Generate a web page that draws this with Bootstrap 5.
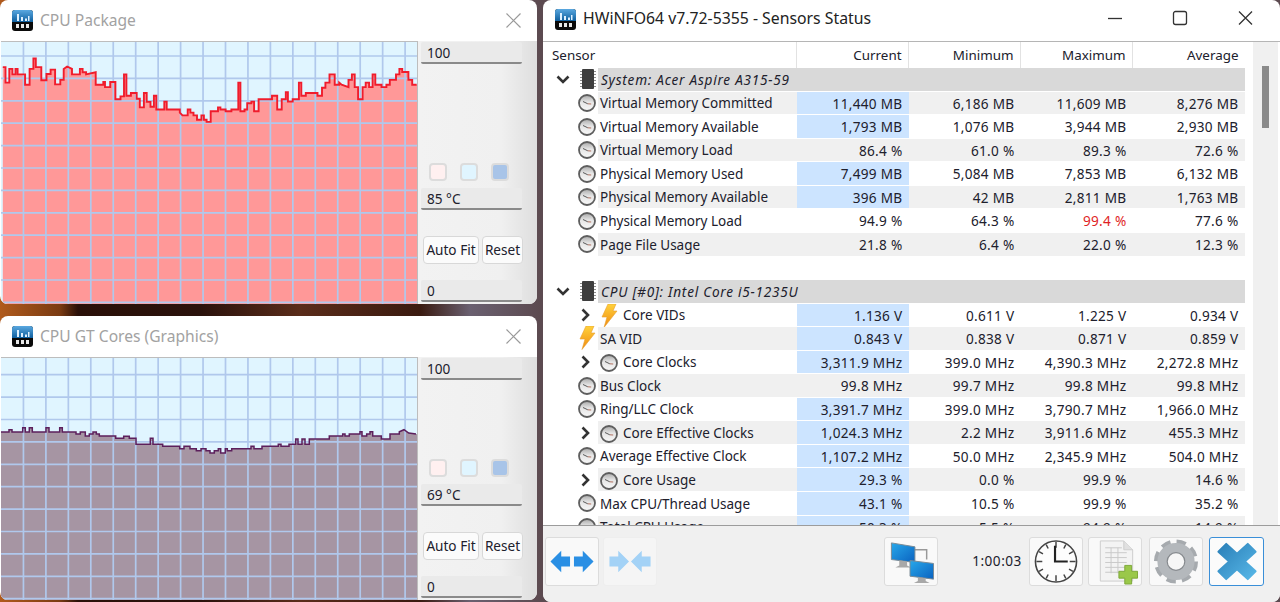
<!DOCTYPE html>
<html lang="en">
<head>
  <meta charset="UTF-8">
  <title>HWiNFO64 Sensors Status</title>
  <link rel="stylesheet" href="https://cdn.jsdelivr.net/npm/bootstrap@5.3.0/dist/css/bootstrap.min.css">
  <style>
    html, body { height: 100%; margin: 0; overflow: hidden; }
    body {
      background: linear-gradient(90deg, #b05a1c 0, #7a3b12 60px, #2a1008 78px, #2a120c 200px, #5a2c1a 300px, #3a1a10 420px, #6a6070 470px, #5c4a50 540px);
      font-family: "Noto Sans", "Liberation Sans", sans-serif;
      font-size: 13.6px;
      color: #20202c;
    }
    .win { background: #fff; border-radius: 8px; overflow: hidden; }
    .win-graph { left: 0; width: 537px; }
    .win-a { top: 0; height: 304px; }
    .win-b { top: 316px; height: 284px; }
    .win-main { left: 543px; top: 0; width: 737px; height: 602px; }
    .titlebar { height: 41px; flex: none; }
    .title-dim { color: #a2a2a2; font-size: 15.6px; margin-left: 7px; }
    .title-main { color: #222; font-size: 15.8px; margin-left: 7px; }
    .titlebar-main { padding-bottom: 3px; }
    .win-btns { margin: 0 27px 3px auto; }
    .app-icon { margin-left: 12px; }
    .close-dim { margin-left: auto; margin-right: 16px; }
    .graph-svg { display: block; width: 416px; flex: none; margin-left: 1px; border-top: 1px solid #bdbdbd; border-right: 1px solid #bdbdbd; box-sizing: content-box; }
    .side { flex: 1; padding: 1px 0 2px 3px; background: linear-gradient(90deg, #f2f2f2 0, #f0f0f0 70%, #dedede 100%); }
    .side-field { width: 101px; height: 22px; line-height: 21px; padding-left: 6px; background: #eaeaea; border-bottom: 2px solid #8a8a8a; border-radius: 2px; }
    .swatch-row { gap: 13px; margin: 0 0 7px 8px; }
    .swatch { width: 18px; height: 18px; border: 2px solid #dcdcdc; border-radius: 4px; }
    .fit-row { gap: 3px; margin: 26px 0 16px 2px; }
    .fit-btn { height: 28px; padding: 0; font-size: 13.6px; line-height: 26px; white-space: nowrap; background: #fbfbfb; border: 1px solid #d8d8d8; border-radius: 4px; color: #20202c; }
    .fit-wide { width: 56px; }
    .fit-narrow { width: 41px; }
    .main-body { flex: 1; min-height: 0; overflow: hidden; border-top: 1px solid #b5b5b5; }
    .sensors { width: 702px; padding-left: 5px; }
    .head-row { height: 26.2px; font-size: 13.4px; }
    .head-name { width: 248.5px; padding-left: 4px; line-height: 27px; border-right: 1px solid #e2e2e2; }
    .head-val { width: 112px; padding-right: 6px; line-height: 27px; text-align: right; border-right: 1px solid #e2e2e2; }
    .head-val:last-child { border-right: 0; }
    .srow { height: 23.55px; padding-bottom: 1px; line-height: 23.5px; white-space: nowrap; }
    .gutter { width: 50px; flex: none; position: relative; }
    .chev { display: block; flex: none; }
    .gutter-in { height: 100%; padding-left: 8px; gap: 9px; }
    .gutter-exp { padding-right: 8px; }
    .gutter-ico { height: 100%; justify-content: flex-end; padding-right: 2px; }
    .sname { width: 198.5px; flex: none; padding: 2px 0 0 2px; font-size: 13.5px; }
    .sval { width: 112px; flex: none; padding-right: 6px; text-align: right; letter-spacing: .3px; }
    .alt .sname, .alt .sval { background: #f0f0f0; }
    .sval.hot, .alt .sval.hot { background: #cce4ff; }
    .group-name { flex: 1; background: #d9d9d9; padding-left: 3px; font-style: italic; letter-spacing: .75px; }
    .peak { color: #e01f26; }
    .ind-ico { margin-right: 5px; flex: none; }
    .scroll-track { width: 25px; margin-left: 8px; background: #f0f0f0; padding: 24px 0 0 9px; }
    .scroll-thumb { width: 7px; height: 62px; background: #8a8a8a; }
    .toolbar { height: 77px; flex: none; background: #f0f0f0; border-top: 1px solid #9c9c9c; padding: 11px 16px 0 2px; }
    .tool-btn { width: 54px; height: 49px; padding: 0; flex: none; background: #f9f9f9; border: 1px solid #dcdcdc; border-radius: 3px; }
    .tool-off { background: #f5f5f5; border-color: #eeeeee; }
    .tool-on { background: #fbfbfb; border-color: #3a8fd8; width: 55px; margin-left: 2px; }
    .tool-spacer { width: 219px; flex: none; }
    .tool-doc { margin-left: 1px; }
    .tool-gear { margin-left: 3px; }
    .timer { margin: 0 3px 0 30px; width: 50px; text-align: center; line-height: 47px; font-size: 13.6px; letter-spacing: .5px; white-space: nowrap; }
  </style>
</head>
<body>
  <svg width="0" height="0" class="position-absolute">
    <defs>
      <linearGradient id="gBlue" x1="0" y1="0" x2="0" y2="1"><stop offset="0" stop-color="#5aa8e0"/><stop offset="1" stop-color="#0f5f9e"/></linearGradient>
      <linearGradient id="gFace" x1="0" y1="0" x2="0" y2="1"><stop offset="0" stop-color="#a8a8a8"/><stop offset=".45" stop-color="#e6e6e6"/><stop offset="1" stop-color="#f8f8f8"/></linearGradient>
      <linearGradient id="gBolt" x1="0" y1="0" x2="0" y2="1"><stop offset="0" stop-color="#ffd23c"/><stop offset="1" stop-color="#f08a10"/></linearGradient>
      <linearGradient id="gX" x1="0" y1="0" x2="1" y2="1"><stop offset="0" stop-color="#2a7fb8"/><stop offset="1" stop-color="#58b8e8"/></linearGradient>
      <linearGradient id="gScreen" x1="0" y1="0" x2="1" y2="1"><stop offset="0" stop-color="#28a8ea"/><stop offset="1" stop-color="#0a62c0"/></linearGradient>
      <symbol id="appIcon" viewBox="0 0 21 21">
        <rect width="21" height="21" rx="3" fill="#0a0a0a"/>
        <path d="M3 0h15a3 3 0 0 1 3 3v9H0V3a3 3 0 0 1 3-3z" fill="url(#gBlue)"/>
        <path d="M5 4h2v7H5zM9 7h2v4H9zM13 8.500h2V11h-2zM16 6h1.500v5H16z" fill="#dff1ff"/>
        <path d="M4 14h3v4H4zM9 14h3v4H9zM14 14h3v4h-3z" fill="#e8e8e8"/>
      </symbol>
      <symbol id="gaugeIcon" viewBox="0 0 18 18">
        <circle cx="9" cy="9" r="8" fill="url(#gFace)" stroke="#5e5e5e" stroke-width="1.800"/>
        <path d="M5 7.500L9.800 9.800" fill="none" stroke="#5a5a5a" stroke-width="1"/>
        <path d="M9.800 9.800l3.400.2" stroke="#b07060" stroke-width="1"/>
      </symbol>
      <symbol id="boltIcon" viewBox="0 0 18 24">
        <path d="M8 0h8l-3 7h4L4 23.500l3-10.500H2z" fill="url(#gBolt)" stroke="#e8a030" stroke-width=".6"/>
      </symbol>
      <symbol id="chipIcon" viewBox="0 0 18 22">
        <rect x="3" y="1" width="12" height="20" rx="1" fill="#3e3e3e"/>
        <path d="M1 3.500h2M1 6.500h2M1 9.500h2M1 12.500h2M1 15.500h2M1 18.500h2M15 3.500h2M15 6.500h2M15 9.500h2M15 12.500h2M15 15.500h2M15 18.500h2" stroke="#8a8a8a"/>
      </symbol>
      <symbol id="chevDown" viewBox="0 0 14 9"><path d="M1.500 1.500L7 7l5.500-5.500" fill="none" stroke="#333" stroke-width="2.600"/></symbol>
      <symbol id="chevRight" viewBox="0 0 9 14"><path d="M1.500 1.500L7 7l-5.500 5.500" fill="none" stroke="#333" stroke-width="2.600"/></symbol>
    </defs>
  </svg>

  <!-- CPU Package window -->
  <div class="win win-graph win-a position-absolute d-flex flex-column">
    <div class="titlebar d-flex align-items-center">
      <svg class="app-icon" width="21" height="21"><use href="#appIcon"/></svg>
      <span class="title-dim">CPU Package</span>
      <svg class="close-dim" width="15" height="15" viewBox="0 0 15 15"><path d="M.5 .5l14 14M14.500 .5l-14 14" stroke="#9a9a9a" stroke-width="1.200"/></svg>
    </div>
    <div class="d-flex flex-grow-1">
      <svg id="graphA" class="graph-svg" height="262"></svg>
      <div class="side d-flex flex-column">
        <div class="side-field">100</div>
        <div class="swatch-row d-flex mt-auto">
          <div class="swatch" style="background:#fff0f0"></div>
          <div class="swatch" style="background:#e0f5ff"></div>
          <div class="swatch" style="background:#a8c4e8"></div>
        </div>
        <div class="side-field">85 °C</div>
        <div class="fit-row d-flex">
          <button class="btn fit-btn fit-wide">Auto Fit</button>
          <button class="btn fit-btn fit-narrow">Reset</button>
        </div>
        <div class="side-field">0</div>
      </div>
    </div>
  </div>

  <!-- CPU GT Cores window -->
  <div class="win win-graph win-b position-absolute d-flex flex-column">
    <div class="titlebar d-flex align-items-center">
      <svg class="app-icon" width="21" height="21"><use href="#appIcon"/></svg>
      <span class="title-dim">CPU GT Cores (Graphics)</span>
      <svg class="close-dim" width="15" height="15" viewBox="0 0 15 15"><path d="M.5 .5l14 14M14.500 .5l-14 14" stroke="#9a9a9a" stroke-width="1.200"/></svg>
    </div>
    <div class="d-flex flex-grow-1">
      <svg id="graphB" class="graph-svg" height="242"></svg>
      <div class="side d-flex flex-column">
        <div class="side-field">100</div>
        <div class="swatch-row d-flex mt-auto">
          <div class="swatch" style="background:#fff0f0"></div>
          <div class="swatch" style="background:#e0f5ff"></div>
          <div class="swatch" style="background:#a8c4e8"></div>
        </div>
        <div class="side-field">69 °C</div>
        <div class="fit-row d-flex">
          <button class="btn fit-btn fit-wide">Auto Fit</button>
          <button class="btn fit-btn fit-narrow">Reset</button>
        </div>
        <div class="side-field">0</div>
      </div>
    </div>
  </div>

  <!-- Sensors Status window -->
  <div class="win win-main position-absolute d-flex flex-column">
    <div class="titlebar titlebar-main d-flex align-items-center">
      <svg class="app-icon" width="21" height="21"><use href="#appIcon"/></svg>
      <span class="title-main">HWiNFO64 v7.72-5355 - Sensors Status</span>
      <svg class="win-btns" width="145" height="16" viewBox="0 0 145 16">
        <path d="M0 8.500h14" stroke="#333" stroke-width="1.300"/>
        <rect x="65.500" y="1.500" width="13" height="13" rx="2" fill="none" stroke="#333" stroke-width="1.300"/>
        <path d="M131 1.500l13 13M144 1.500l-13 13" stroke="#333" stroke-width="1.300"/>
      </svg>
    </div>
    <div class="main-body d-flex">
      <div class="sensors" id="sensorList">
        <div class="head-row d-flex">
          <div class="head-name">Sensor</div>
          <div class="head-val">Current</div>
          <div class="head-val">Minimum</div>
          <div class="head-val">Maximum</div>
          <div class="head-val">Average</div>
        </div>
      </div>
      <div class="scroll-track"><div class="scroll-thumb"></div></div>
    </div>
    <div class="toolbar d-flex gap-1">
      <button class="btn tool-btn" aria-label="Expand">
        <svg width="52" height="47" viewBox="0 0 52 48"><path d="M4 24l11-11v6h9v10h-9v6zM48 24L37 13v6h-9v10h9v6z" fill="#2a8fe4"/></svg>
      </button>
      <button class="btn tool-btn tool-off" aria-label="Collapse">
        <svg width="52" height="47" viewBox="0 0 52 48"><path d="M25 24L14 13v6H5v10h9v6zM27 24l11-11v6h9v10h-9v6z" fill="#a3d2f6"/></svg>
      </button>
      <span class="tool-spacer"></span>
      <button class="btn tool-btn" aria-label="Network">
        <svg width="52" height="47" viewBox="0 0 52 48">
          <path d="M27 12h15v10" fill="none" stroke="#999" stroke-width="1.500"/>
          <path d="M6 5l24 4v16l-24-3z" fill="url(#gScreen)" stroke="#7a8a96"/>
          <path d="M14 23l8 1v4l4 2H10l4-2z" fill="#a8a8a8"/>
          <path d="M25 23l24 3v16l-24-3z" fill="url(#gScreen)" stroke="#7a8a96"/>
          <path d="M33 40l8 1v3l4 2H29l4-2z" fill="#a8a8a8"/>
        </svg>
      </button>
      <div class="timer">1:00:03</div>
      <button class="btn tool-btn" aria-label="Timer">
        <svg width="52" height="47" viewBox="0 0 52 48">
          <circle cx="26" cy="24" r="21" fill="#fdfdfd" stroke="#444" stroke-width="1.600"/>
          <path d="M26 4v6M26 38v6M6 24h6M40 24h6M16 6.700l2 4M34 37.300l2 4M36 6.700l-2 4M18 37.300l-2 4M8.700 14l4 2.300M39.300 31.700l4 2.300M8.700 34l4-2.300M39.300 16.300l4-2.300" stroke="#444" stroke-width="1.500"/>
          <path d="M25 8v16h13" fill="none" stroke="#222" stroke-width="2.200"/>
        </svg>
      </button>
      <button class="btn tool-btn tool-doc" aria-label="Logging">
        <svg width="52" height="47" viewBox="0 0 52 48">
          <path d="M11 3h24l9 9v32H11z" fill="#f3f3f3" stroke="#cdcdcd"/>
          <path d="M35 3v9h9" fill="#e0e0e0" stroke="#cdcdcd"/>
          <path d="M16 10h17M16 15h22M16 20h22M16 25h22M16 30h22M16 35h22M22 10v26M29 10v26" stroke="#c9c9c9"/>
          <path d="M36 28h7v6h6v7h-6v6h-7v-6h-6v-7h6z" fill="#9ac84a" stroke="#7da838"/>
        </svg>
      </button>
      <button class="btn tool-btn tool-gear" aria-label="Settings">
        <svg width="52" height="47" viewBox="0 0 52 48">
          <circle cx="26" cy="24" r="19" fill="none" stroke="#a6aaae" stroke-width="7" stroke-dasharray="9 5.920"/>
          <circle cx="26" cy="24" r="14" fill="none" stroke="#b4b8bc" stroke-width="10"/>
          <circle cx="26" cy="24" r="9" fill="#f6f6f6" stroke="#85898d" stroke-width="1.200"/>
        </svg>
      </button>
      <button class="btn tool-btn tool-on" aria-label="Close">
        <svg width="52" height="47" viewBox="0 0 52 48">
          <path d="M15 6l11 10L37 6l8 8-11 10 11 10-8 8-11-10-11 10-8-8 11-10L7 14z" fill="url(#gX)" stroke-linejoin="round" stroke="url(#gX)" stroke-width="2"/>
        </svg>
      </button>
    </div>
  </div>

  <script>
    // sensor rows: [kind, name, icon, current, min, max, avg, blue current]
    var rows = [
      ['g', 'System: Acer Aspire A315-59'],
      ['s', 'Virtual Memory Committed', 'gaugeIcon', '11,440 MB', '6,186 MB', '11,609 MB', '8,276 MB', 1],
      ['s', 'Virtual Memory Available', 'gaugeIcon', '1,793 MB', '1,076 MB', '3,944 MB', '2,930 MB', 1],
      ['s', 'Virtual Memory Load', 'gaugeIcon', '86.4 %', '61.0 %', '89.3 %', '72.6 %', 0],
      ['s', 'Physical Memory Used', 'gaugeIcon', '7,499 MB', '5,084 MB', '7,853 MB', '6,132 MB', 1],
      ['s', 'Physical Memory Available', 'gaugeIcon', '396 MB', '42 MB', '2,811 MB', '1,763 MB', 1],
      ['s', 'Physical Memory Load', 'gaugeIcon', '94.9 %', '64.3 %', '<span class="peak">99.4 %</span>', '77.6 %', 0],
      ['s', 'Page File Usage', 'gaugeIcon', '21.8 %', '6.4 %', '22.0 %', '12.3 %', 0],
      ['b'],
      ['g', 'CPU [#0]: Intel Core i5-1235U'],
      ['e', 'Core VIDs', 'boltIcon', '1.136 V', '0.611 V', '1.225 V', '0.934 V', 1],
      ['s', 'SA VID', 'boltIcon', '0.843 V', '0.838 V', '0.871 V', '0.859 V', 1],
      ['e', 'Core Clocks', 'gaugeIcon', '3,311.9 MHz', '399.0 MHz', '4,390.3 MHz', '2,272.8 MHz', 1],
      ['s', 'Bus Clock', 'gaugeIcon', '99.8 MHz', '99.7 MHz', '99.8 MHz', '99.8 MHz', 0],
      ['s', 'Ring/LLC Clock', 'gaugeIcon', '3,391.7 MHz', '399.0 MHz', '3,790.7 MHz', '1,966.0 MHz', 1],
      ['e', 'Core Effective Clocks', 'gaugeIcon', '1,024.3 MHz', '2.2 MHz', '3,911.6 MHz', '455.3 MHz', 1],
      ['s', 'Average Effective Clock', 'gaugeIcon', '1,107.2 MHz', '50.0 MHz', '2,345.9 MHz', '504.0 MHz', 1],
      ['e', 'Core Usage', 'gaugeIcon', '29.3 %', '0.0 %', '99.9 %', '14.6 %', 1],
      ['s', 'Max CPU/Thread Usage', 'gaugeIcon', '43.1 %', '10.5 %', '99.9 %', '35.2 %', 1],
      ['s', 'Total CPU Usage', 'gaugeIcon', '50.3 %', '5.5 %', '94.9 %', '14.9 %', 1]
    ];

    function icon(id, cls) {
      var h = id === 'boltIcon' ? 24 : 18;
      return '<svg class="' + (cls || '') + '" width="18" height="' + h + '"><use href="#' + id + '"/></svg>';
    }

    var html = '';
    rows.forEach(function (r, i) {
      var alt = r[0] !== 'g' && r[0] !== 'b' && i % 2 === 1 ? ' alt' : '';
      if (r[0] === 'b') {
        html += '<div class="srow"></div>';
      } else if (r[0] === 'g') {
        html += '<div class="srow d-flex"><div class="gutter"><div class="gutter-in d-flex align-items-center">' +
          '<svg class="chev" width="14" height="9"><use href="#chevDown"/></svg>' +
          '<svg width="18" height="22"><use href="#chipIcon"/></svg></div></div>' +
          '<div class="group-name">' + r[1] + '</div></div>';
      } else {
        var gut, name;
        if (r[0] === 'e') {
          gut = '<div class="gutter-in gutter-exp d-flex align-items-center justify-content-end">' +
            '<svg class="chev" width="9" height="14"><use href="#chevRight"/></svg></div>';
          name = icon(r[2], 'ind-ico') + '<span>' + r[1] + '</span>';
        } else {
          gut = '<div class="gutter-ico d-flex align-items-center">' + icon(r[2]) + '</div>';
          name = '<span>' + r[1] + '</span>';
        }
        html += '<div class="srow d-flex' + alt + '"><div class="gutter">' + gut + '</div>' +
          '<div class="sname d-flex align-items-center">' + name + '</div>' +
          '<div class="sval' + (r[7] ? ' hot' : '') + '">' + r[3] + '</div>' +
          '<div class="sval">' + r[4] + '</div><div class="sval">' + r[5] + '</div><div class="sval">' + r[6] + '</div></div>';
      }
    });
    document.getElementById('sensorList').insertAdjacentHTML('beforeend', html);

    // graph traces, in zoomed-crop units
    var traceA = [8,195,16,195,16,240,27,240,27,200,36,200,36,216,45,216,45,200,51,200,51,216,73,216,73,246,86,246,86,200,97,200,97,170,104,170,104,195,120,195,120,233,135,233,135,215,147,215,147,202,160,202,160,245,175,245,175,232,185,232,185,200,195,193,209,200,209,216,232,216,232,200,240,200,240,210,250,210,250,216,278,210,278,246,300,246,300,238,305,238,305,253,320,253,320,238,335,238,335,288,350,288,350,280,360,280,360,216,367,216,367,278,380,278,380,270,397,270,397,287,406,287,406,312,418,312,418,270,426,270,426,296,437,296,437,310,447,310,447,278,454,278,454,318,477,318,477,295,484,295,484,318,522,318,522,327,530,335,545,335,545,318,553,318,553,327,562,327,562,335,572,335,572,348,585,348,585,335,592,335,592,348,600,348,600,354,612,354,612,323,633,323,633,312,640,312,640,318,655,318,655,323,672,323,672,318,692,318,692,240,698,240,698,323,710,323,710,318,718,318,718,300,730,300,730,295,738,295,738,323,751,323,751,288,790,288,790,278,805,278,805,318,818,318,818,288,830,288,830,268,836,268,836,295,850,295,850,288,868,288,868,240,875,240,875,278,888,278,888,270,922,270,922,278,935,278,935,255,945,255,945,240,957,240,957,216,972,216,972,246,985,246,985,240,992,246,1012,253,1012,232,1022,232,1022,216,1030,216,1030,253,1040,253,1040,288,1053,288,1053,253,1062,253,1062,240,1072,240,1072,253,1082,253,1082,216,1090,216,1090,246,1108,246,1108,253,1122,253,1122,246,1132,246,1132,232,1150,232,1150,216,1160,216,1160,200,1168,200,1168,209,1186,209,1186,232,1197,232,1197,246,1210,246];
    var traceB = [3,423,27,423,27,416,36,416,36,423,68,423,68,410,76,410,76,423,88,423,88,410,97,410,97,423,138,423,138,410,147,410,147,423,179,423,179,410,187,410,187,423,228,423,228,429,241,429,241,423,256,423,256,435,268,435,268,429,279,429,279,423,289,423,289,429,298,429,298,435,347,435,347,442,371,442,371,436,388,436,388,442,408,442,408,460,451,460,451,442,459,442,459,460,488,460,488,466,539,466,539,473,552,473,552,466,570,466,570,473,589,473,589,479,603,479,603,473,618,473,618,479,630,479,630,486,643,486,643,479,655,479,655,473,662,473,662,486,676,486,676,473,682,473,682,479,695,479,695,473,753,473,753,466,762,466,762,473,786,473,786,466,835,466,835,460,843,460,843,466,867,466,867,460,887,460,887,444,894,444,894,460,906,460,906,444,915,444,915,460,928,460,928,444,988,444,988,435,1028,435,1028,429,1035,429,1035,435,1048,435,1048,429,1080,429,1080,422,1086,422,1086,435,1100,435,1100,429,1110,429,1110,422,1118,422,1118,435,1144,435,1144,444,1170,444,1170,429,1198,429,1198,422,1212,416,1226,426,1248,429];

    function drawGraph(id, trace, sx, y0, gridY, h, fillCol, lineCol, lineW) {
      var pts = [], i;
      for (i = 0; i < trace.length; i += 2) {
        pts.push((trace[i] / sx - 1).toFixed(1) + ',' + (trace[i + 1] / sx - y0).toFixed(1));
      }
      var first = pts[0].split(',')[0];
      var s = '<rect width="416" height="' + h + '" fill="#e0f5ff"/>';
      s += '<polygon fill="' + fillCol + '" points="' + first + ',' + h + ' ' + pts.join(' ') + ' 416,' + pts[pts.length - 1].split(',')[1] + ' 416,' + h + '"/>';
      for (i = 1; i < 19; i++) {
        s += '<path d="M' + (i * 22.45) + ' 0V' + h + '" stroke="#b0c8ec" stroke-width="1.700"/>';
      }
      for (i = gridY; i < h; i += 22.4) {
        s += '<path d="M0 ' + i + 'H416" stroke="#b0c8ec" stroke-width="1.700"/>';
      }
      s += '<polyline fill="none" stroke="' + lineCol + '" stroke-width="' + lineW + '" points="' + pts.join(' ') + '"/>';
      var el = document.getElementById(id);
      el.setAttribute('viewBox', '0 0 416 ' + h);
      el.innerHTML = s;
    }
    drawGraph('graphA', traceA, 2.904, 42, 14, 262, '#ff9898', '#f01c2c', 1.900);
    // crop of graph B started at y=290, so shift by 357-290
    drawGraph('graphB', traceB, 3, 67, 16.7, 242, '#a695a3', '#5c1f5c', 1.500);
  </script>
  <script src="https://cdn.jsdelivr.net/npm/bootstrap@5.3.0/dist/js/bootstrap.bundle.min.js"></script>
</body>
</html>
